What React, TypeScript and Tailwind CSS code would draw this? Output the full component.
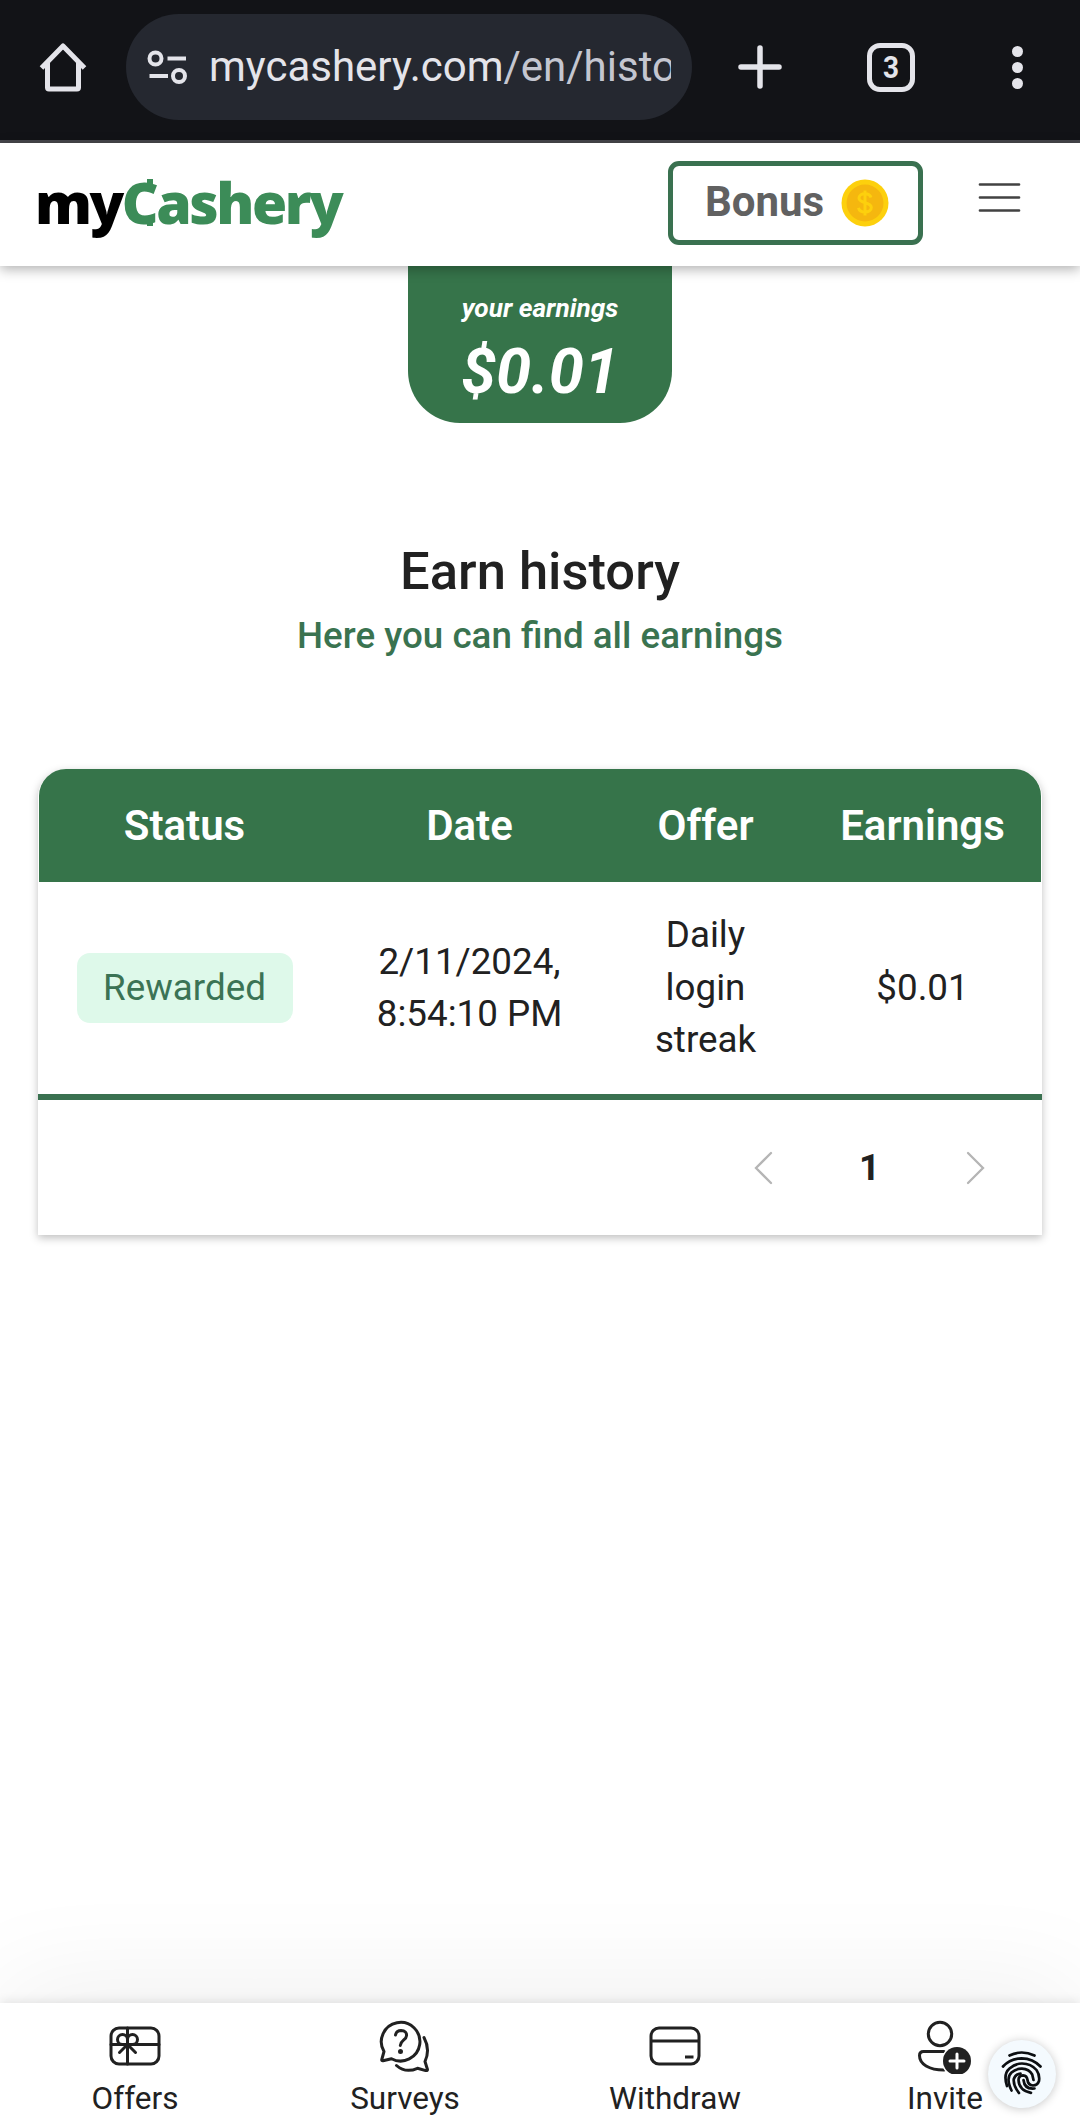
import type { ReactNode } from "react";

function BrowserBar() {
  return (
    <div className="flex h-[143px] shrink-0 flex-col bg-[#121317]">
      <div className="flex h-[140px] items-start">
        <div className="flex h-[134px] w-[126px] items-center justify-center">
          <svg width="48" height="50" viewBox="0 0 48 50" fill="none" stroke="#e4e4ea" strokeWidth="5" strokeLinejoin="round">
            <path d="M2.5 26 24 4l21.500 22" />
            <path d="M8.500 21v24.500q0 1.500 1.500 1.500h28q1.500 0 1.500-1.500V21" />
          </svg>
        </div>
        <div className="mt-[14px] flex h-[106px] w-[566px] items-center rounded-full bg-[#252830] pl-[21px]">
          <svg width="40" height="35" viewBox="0 0 40 35" fill="none" stroke="#e4e4ea" strokeWidth="4">
            <circle cx="8.500" cy="8.500" r="6" />
            <path d="M20.500 8.500H39M2.500 26H21" />
            <circle cx="32" cy="26" r="6" />
          </svg>
          <div className="ml-[22px] w-[462px] overflow-hidden text-[42px] leading-[60px] whitespace-nowrap text-[#e4e4ea]">
            mycashery.com<span className="text-[#c4c6d0]">/en/history</span>
          </div>
        </div>
        <div className="flex h-[134px] w-[136px] items-center justify-center">
          <svg width="44" height="44" viewBox="0 0 44 44" stroke="#e4e4ea" strokeWidth="5.500" strokeLinecap="round">
            <path d="M22 3v38M3 22h38" />
          </svg>
        </div>
        <div className="flex h-[134px] w-[126px] items-center justify-center">
          <div className="flex h-[49px] w-[48px] items-center justify-center rounded-[13px] border-[5.500px] border-[#e4e4ea] text-[31px] leading-none font-bold text-[#e4e4ea]">
            <span className="scale-x-90">3</span>
          </div>
        </div>
        <div className="flex h-[134px] w-[126px] flex-col items-center justify-center gap-[5px]">
          <i className="size-[11px] rounded-full bg-[#e4e4ea]" />
          <i className="size-[11px] rounded-full bg-[#e4e4ea]" />
          <i className="size-[11px] rounded-full bg-[#e4e4ea]" />
        </div>
      </div>
      <div className="h-[3px] bg-[#47474c]" />
    </div>
  );
}

function Logo() {
  return (
    <div className="relative ml-[35px] w-[330px] font-['Open_Sans',sans-serif] text-[57px] leading-[76px] font-extrabold tracking-[-2.500px] whitespace-nowrap text-black">
      my<span className="text-[#3c8c58]">Cashery</span>
      <svg className="absolute top-[15px] left-[108px]" width="14" height="50" viewBox="0 0 14 50" fill="#3c8c58">
        <path d="M4 0h6v8H4zM4 39h6v8H4z" />
      </svg>
    </div>
  );
}

function Coin() {
  return (
    <svg width="48" height="48" viewBox="0 0 48 48">
      <circle cx="24" cy="24" r="23.500" fill="#fdd00d" />
      <circle cx="24" cy="24" r="18.500" fill="#f5b70f" />
      <path
        d="M30 18.500c-.8-2.500-3-3.700-6-3.700-3.500 0-6 1.700-6 4.300 0 6 12.300 3.300 12.300 9.500 0 2.700-2.600 4.500-6.300 4.500-3.400 0-5.800-1.500-6.500-4.300M24 11.500v25"
        fill="none"
        stroke="#fdd00d"
        strokeWidth="3"
      />
    </svg>
  );
}

function SiteHeader() {
  return (
    <header className="z-10 flex h-[123px] shrink-0 items-start bg-white shadow-[0_3px_12px_rgba(0,0,0,0.32)]">
      <div className="mt-[21px]">
        <Logo />
      </div>
      <button className="mt-[18px] ml-[303px] flex h-[84px] w-[255px] items-center rounded-[11px] border-[5px] border-[#3a7150] pl-[32px] text-[42px] leading-[48px] font-bold text-[#616161]">
        <span className="-mt-[2px] w-[136px] text-left">Bonus</span>
        <Coin />
      </button>
      <svg className="mt-[39px] ml-[55px]" width="44" height="32" viewBox="0 0 44 32" stroke="#424242" strokeWidth="2.700" strokeLinecap="round">
        <path d="M2 2.500h39M2 15.500h39M2 28.500h39" />
      </svg>
    </header>
  );
}

const columns = "grid grid-cols-[291px_279px_193px_241px] items-center text-center";

function HistoryTable() {
  return (
    <section className="mx-[38px] mt-[108px] flex h-[466px] flex-col rounded-t-[28px] bg-white shadow-[0_3px_8px_rgba(0,0,0,0.25)]">
      <div className={`${columns} mx-px h-[113px] rounded-t-[27px] bg-[#36744a] text-[42px] font-semibold text-white`}>
        <span>Status</span>
        <span>Date</span>
        <span>Offer</span>
        <span>Earnings</span>
      </div>
      <div className={`${columns} mx-px h-[212px] text-[36.750px] leading-[52.500px] text-[#212121]`}>
        <div>
          <span className="inline-flex h-[70px] w-[216px] items-center justify-center rounded-[13px] bg-[#def9ea] text-[#3b7355]">
            Rewarded
          </span>
        </div>
        <span>
          2/11/2024,
          <br />
          8:54:10 PM
        </span>
        <span>
          Daily
          <br />
          login
          <br />
          streak
        </span>
        <span>$0.01</span>
      </div>
      <div className="h-[6px] bg-[#3a7150]" />
      <div className="flex flex-1 items-center justify-end pr-[56px] text-[36.750px] font-bold text-[#212121]">
        <svg width="20" height="34" viewBox="0 0 20 34" fill="none" stroke="#b5b5b5" strokeWidth="2.300" strokeLinecap="round">
          <path d="M18 2 3 17l15 15" />
        </svg>
        <span className="w-[193px] text-center">1</span>
        <svg width="20" height="34" viewBox="0 0 20 34" fill="none" stroke="#b5b5b5" strokeWidth="2.300" strokeLinecap="round">
          <path d="M2 2 17 17 2 32" />
        </svg>
      </div>
    </section>
  );
}

function GiftCardIcon() {
  return (
    <svg width="52" height="52" viewBox="0 0 52 52" fill="none" stroke="#212121" strokeWidth="3" strokeLinecap="round">
      <rect x="2" y="8" width="48" height="36" rx="8" />
      <path d="M2 24.500h48M18.500 8v36" />
      <path d="M18.500 24.500h-5a5 5 0 1 1 5-5zM18.500 24.500h5a5 5 0 1 0-5-5zM18.500 24.500l-8 8M18.500 24.500l8 8" />
    </svg>
  );
}

function ChatHelpIcon() {
  return (
    <svg width="52" height="52" viewBox="0 0 52 52" fill="none" stroke="#212121" strokeWidth="3" strokeLinecap="round" strokeLinejoin="round">
      <path d="M2.800 39.500 5 31.500A19.300 19.300 0 1 1 12.500 38.700L4 40.800q-1.600.2-1.200-1.300z" />
      <path d="M17.500 45.500q9 8 21 2.800l8.300 2.300q2 .3 1.600-1.400L46 41.500q5.500-12-1-24" />
      <path d="M16.500 15q1-4.500 5.500-4.500 6 .3 5.500 5.300 0 2-3 4.400-3 2.500-3.200 5.300" />
      <circle cx="21.500" cy="31.500" r="1" fill="#212121" />
    </svg>
  );
}

function WalletCardIcon() {
  return (
    <svg width="52" height="52" viewBox="0 0 52 52" fill="none" stroke="#212121" strokeWidth="3">
      <rect x="2" y="8" width="48" height="36" rx="8" />
      <path d="M2 21h48M36 37h8.500" />
    </svg>
  );
}

function PersonAddIcon() {
  return (
    <svg width="54" height="54" viewBox="0 0 54 54" fill="none" stroke="#212121" strokeWidth="3">
      <circle cx="22" cy="14" r="11.700" />
      <path d="M26 31.500H5.500Q1.500 31.500 1.500 35.500C1.500 44 11 50 26 50" strokeLinecap="round" />
      <circle cx="39" cy="41" r="15.500" fill="#fff" stroke="none" />
      <circle cx="39" cy="41" r="14" fill="#212121" stroke="none" />
      <path d="M39 34v14M32 41h14" stroke="#fff" strokeLinecap="round" />
    </svg>
  );
}

function NavItem({ icon, label }: { icon: ReactNode; label: string }) {
  return (
    <div className="flex flex-col items-center pt-[17px] text-[31.500px] leading-[37px] text-[#212121]">
      <div className="flex h-[60px] items-start">{icon}</div>
      {label}
    </div>
  );
}

function FingerprintButton() {
  return (
    <div className="absolute top-[37px] left-[988px] flex size-[68px] items-center justify-center rounded-full bg-[#f4fafe] shadow-[0_1px_10px_rgba(0,0,0,0.22)]">
      <svg width="44" height="48" viewBox="0 0 44 48" fill="none" stroke="#0c0f12" strokeWidth="2.700" strokeLinecap="round">
        <path d="M9.500 5.500Q21.500-.5 34.500 5.500" />
        <path d="M3 16.500Q10 8.500 21.500 8.300 33 8.500 40.500 16.500" />
        <path d="M7 36Q3 24 9.500 18.500 15.500 13.500 22 13.500 31 13.500 36.500 20 40 25 39 31 37.500 35.500 33 35.500 28 35 27.500 30 27 25.500 23 25.300 18.500 25.500 18.500 30 19 40.500 31 42.800" />
        <path d="M11.500 40.500Q5.500 28 11.500 22.500 16 18.500 22 18.700 29 19 32.200 24.500L33.500 30" />
        <path d="M19 43Q13 35 13.800 29 15.500 24 20.500 23.700" />
        <path d="M23.500 30Q24.500 39.500 34.500 38.500" />
      </svg>
    </div>
  );
}

export default function App() {
  return (
    <div className="flex h-[2128px] w-[1080px] flex-col overflow-hidden bg-white font-[Roboto,sans-serif]">
      <BrowserBar />
      <SiteHeader />
      <main className="flex flex-1 flex-col">
        <div className="flex h-[157px] w-[264px] flex-col items-center self-center rounded-b-[52px] bg-[#36744a] pt-[27px] font-bold text-white italic">
          <span className="text-[26.250px] leading-[30px]">your earnings</span>
          <span className="mt-[12px] text-[63px] leading-[74px]">$0.01</span>
        </div>
        <h1 className="mt-[114px] text-center text-[52.500px] leading-[68px] font-medium text-[#212121]">Earn history</h1>
        <p className="mt-[6px] text-center text-[36.750px] leading-[50px] font-medium text-[#3a7350]">Here you can find all earnings</p>
        <HistoryTable />
      </main>
      <nav className="relative grid h-[125px] shrink-0 grid-cols-4 bg-white shadow-[0_-2px_10px_rgba(0,0,0,0.09),0_-20px_110px_rgba(0,0,0,0.06)]">
        <NavItem icon={<GiftCardIcon />} label="Offers" />
        <NavItem icon={<ChatHelpIcon />} label="Surveys" />
        <NavItem icon={<WalletCardIcon />} label="Withdraw" />
        <NavItem icon={<PersonAddIcon />} label="Invite" />
        <FingerprintButton />
      </nav>
    </div>
  );
}
